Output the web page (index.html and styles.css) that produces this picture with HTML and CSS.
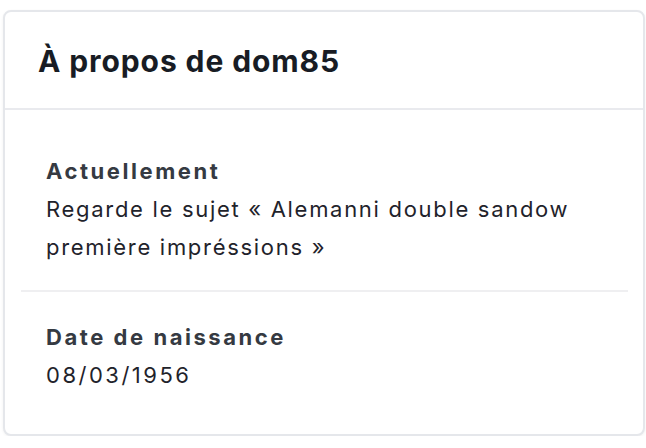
FILE: index.html
```html
<!DOCTYPE html>
<html lang="fr">
<head>
<meta charset="utf-8">
<link rel="stylesheet" href="styles.css">
</head>
<body>
<section class="card">
  <header class="card-header">
    <h2 class="title">À propos de dom85</h2>
  </header>
  <div class="card-body">
    <div class="item">
      <div class="label">Actuellement</div>
      <div class="value">Regarde le sujet « Alemanni double sandow première impréssions »</div>
    </div>
    <div class="item">
      <div class="label">Date de naissance</div>
      <div class="value value-date">08/03/1956</div>
    </div>
  </div>
</section>
</body>
</html>
```
FILE: styles.css
```css
html, body {
  margin: 0;
  padding: 0;
  background: #ffffff;
}
body {
  font-family: Inter, "Noto Sans", sans-serif;
  padding: 10px 1px 0 3px;
}
.card {
  box-sizing: border-box;
  width: 642px;
  height: 426px;
  border: 2px solid #e5e7eb;
  border-radius: 8px;
  box-shadow: 0 1px 3px rgba(0,0,0,0.06);
  background: #fff;
}
.card-header {
  height: 98px;
  box-sizing: border-box;
  border-bottom: 2px solid #e9eaee;
  padding: 2px 0 0 33px;
  display: flex;
  align-items: center;
}
.title {
  margin: 0;
  font-size: 30px;
  font-weight: 700;
  color: #181c24;
  letter-spacing: 0.9px;
}
.card-body {
  padding: 0 15px 0 16px;
}
.item {
  padding: 42px 25px 24px 25px;
}
.item + .item {
  border-top: 2px solid #efeff1;
  padding-top: 26px;
}
.label {
  font-size: 22px;
  font-weight: 700;
  color: #353a42;
  line-height: 38px;
  letter-spacing: 2.55px;
}
.value {
  font-size: 22px;
  color: #1f232b;
  line-height: 38px;
  letter-spacing: 1.7px;
}
.value-date {
  letter-spacing: 2.5px;
}
```
